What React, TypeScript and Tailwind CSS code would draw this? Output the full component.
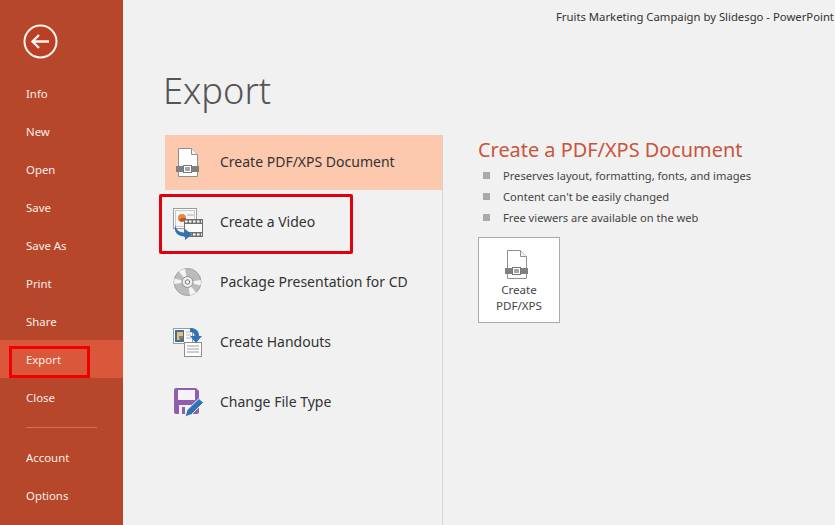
const top = ["Info", "New", "Open", "Save", "Save As", "Print", "Share", "Export", "Close"];

function Nav({ label }: { label: string }) {
  const active = label === "Export";
  return (
    <div className={`h-[38px] flex items-center pl-[26px] pt-[1px] text-[11.4px] text-[#fbeee9] ${active ? "bg-[#d9583b]" : ""}`}>
      {label}
    </div>
  );
}

function PdfIcon() {
  return (
    <svg width="38" height="38" viewBox="0 0 38 38" className="shrink-0">
      <path d="M8.5 24V4.5H21.5L27.5 10.5V24ZM8.5 27V32.5H27.5V27Z" fill="#fff" stroke="#8f8f8f" />
      <path d="M21.5 4.5V10.5H27.5" fill="#f3f3f3" stroke="#8f8f8f" />
      <rect x="6" y="22" width="7" height="6" fill="#808080" />
      <rect x="22" y="22" width="7" height="6" fill="#808080" />
      <rect x="13.5" y="21.5" width="8" height="7" fill="#fff" stroke="#777" />
      <rect x="15" y="23" width="5" height="4" fill="#a6a6a6" />
    </svg>
  );
}

function VideoIcon() {
  return (
    <svg width="38" height="38" viewBox="0 0 38 38" className="shrink-0">
      <rect x="3.5" y="4.5" width="23" height="20" fill="#fff" stroke="#9a9a9a" />
      <rect x="5.5" y="6.5" width="19" height="16" fill="#f4f6f8" stroke="#c8c8c8" />
      <circle cx="12" cy="14" r="4" fill="#e58a3c" />
      <path d="M9 16A4 4 0 0 0 16 14L12 14Z" fill="#c64f32" />
      <path d="M17 11H24" stroke="#b0b0b0" />
      <rect x="14" y="15" width="19" height="18" fill="#6f6f6f" />
      <rect x="15" y="20" width="17" height="8" fill="#fbfbfb" />
      <path d="M15 17.5H32M15 30.5H32" stroke="#fff" strokeWidth="2" strokeDasharray="2.5 1.5" />
      <path d="M5.5 21C6 26 9 28.5 15 28.5V25L22 30.5L15 36V32.5C8 32.5 3 28 5.5 21Z" fill="#2e74b5" />
    </svg>
  );
}

function DiscIcon() {
  return (
    <svg width="38" height="38" viewBox="0 0 38 38" className="shrink-0">
      <circle cx="17.5" cy="18" r="13.5" fill="#bcbcbc" stroke="#a0a0a0" />
      <path d="M17.5 18L9 7.5A13.5 13.5 0 0 1 15 4.7ZM17.5 18L26 28.5A13.5 13.5 0 0 1 20 31.3ZM17.5 18L30.7 16A13.5 13.5 0 0 1 30.5 21.5ZM17.5 18L4.3 20A13.5 13.5 0 0 1 4.5 14.5Z" fill="#f4f4f4" />
      <circle cx="17.5" cy="18" r="5.5" fill="#ededed" stroke="#8f8f8f" />
      <circle cx="17.5" cy="18" r="2.2" fill="#f7f7f7" stroke="#7a7a7a" />
    </svg>
  );
}

function HandoutIcon() {
  return (
    <svg width="38" height="38" viewBox="0 0 38 38" className="shrink-0">
      <rect x="3.5" y="4.5" width="19" height="15" fill="#fff" stroke="#9a9a9a" />
      <rect x="5" y="6" width="9" height="12" fill="#3f6f9f" />
      <path d="M7 8H13V14L9 16H7Z" fill="#e5bf7d" />
      <path d="M9 12H13V15H9Z" fill="#9b7a3f" />
      <path d="M16 8H21M16 11H21M16 14H21" stroke="#b0b0b0" />
      <rect x="14.5" y="18.5" width="17" height="14" fill="#fff" stroke="#8c8c8c" />
      <path d="M17 22H29M17 25H29M17 28H29" stroke="#9a9a9a" />
      <path d="M20 4C26 4 29 7 29 12H32L26 19L20 12H24.5C24.5 9.5 23 8 20 8Z" fill="#2e74b5" />
    </svg>
  );
}

function SaveIcon() {
  return (
    <svg width="38" height="38" viewBox="0 0 38 38" className="shrink-0">
      <path d="M6 4H26L29 7V28Q29 30 27 30H6Q4 30 4 28V6Q4 4 6 4Z" fill="#8f5fae" />
      <rect x="8" y="6" width="17" height="10" fill="#f6f2f9" />
      <rect x="9" y="21" width="14" height="9" fill="#f6f2f9" />
      <rect x="12" y="23" width="3" height="7" fill="#8f5fae" />
      <path d="M15 33L17 26L29 14.5L33.5 18.5L21.5 30.5Z" fill="#2e74b5" stroke="#f1f1f1" />
    </svg>
  );
}

function Row({ label, active, icon }: { label: string; active?: boolean; icon: React.ReactNode }) {
  return (
    <div className={`h-[55px] flex items-center text-[14px] text-[#333] ${active ? "bg-[#fcc9ae]" : ""}`}>
      <div className="w-[55px] pl-[5px] pt-[1px] flex">{icon}</div>
      <span className="pb-[2px]">{label}</span>
    </div>
  );
}

export default function App() {
  return (
    <div className="relative flex w-[835px] h-[525px] overflow-hidden bg-[#f1f1f1] font-['Noto_Sans','Open_Sans',sans-serif]">
      <aside className="w-[123px] shrink-0 bg-[#b7472a] flex flex-col">
        <div className="pl-[23px] pt-[24px] pb-[15px]">
          <svg width="35" height="35" viewBox="0 0 35 35">
            <circle cx="17.5" cy="17.5" r="16" fill="#bb3f24" stroke="#fdf3ef" strokeWidth="2" />
            <path d="M9.5 17.5H26M16 11L9.5 17.5L16 24" fill="none" stroke="#fdf3ef" strokeWidth="2.4" />
          </svg>
        </div>
        {top.map((t) => <Nav key={t} label={t} />)}
        <div className="mx-[26px] my-[11px] h-px bg-[#cf7358]" />
        <div className="-mt-[1px]">
          <Nav label="Account" />
          <Nav label="Options" />
        </div>
      </aside>

      <main className="flex-1 flex flex-col min-w-0">
        <div className="h-[33px] pl-[433px] pt-[8px] text-[11.3px] leading-[17px] text-[#333] whitespace-nowrap">
          Fruits Marketing Campaign by Slidesgo - PowerPoint
        </div>
        <h1 className="pl-[40px] mt-[29px] h-[73px] text-[36.3px] leading-[56px] font-light text-[#555]">Export</h1>
        <div className="flex flex-1 pl-[42px]">
          <div className="w-[278px] border-r border-[#d4d4d4] flex flex-col gap-[5px]">
            <Row active label="Create PDF/XPS Document" icon={<PdfIcon />} />
            <Row label="Create a Video" icon={<VideoIcon />} />
            <Row label="Package Presentation for CD" icon={<DiscIcon />} />
            <Row label="Create Handouts" icon={<HandoutIcon />} />
            <Row label="Change File Type" icon={<SaveIcon />} />
          </div>
          <div className="pl-[35px]">
            <h2 className="text-[19.9px] leading-[30px] text-[#c9553c]">Create a PDF/XPS Document</h2>
            <ul className="mt-[1px] text-[11.15px] text-[#444]">
              {["Preserves layout, formatting, fonts, and images", "Content can't be easily changed", "Free viewers are available on the web"].map((t) => (
                <li key={t} className="h-[21px] flex items-center">
                  <span className="w-[7px] h-[7px] bg-[#aaa] ml-[5px] mr-[13px] mb-[3px]" />
                  {t}
                </li>
              ))}
            </ul>
            <button className="mt-[8px] w-[82px] h-[86px] bg-white border border-[#ababab] flex flex-col items-center pt-[8px] text-[11.6px] leading-[16px] text-[#444]">
              <span className="mr-[3px] flex"><PdfIcon /></span>
              <span className="-mt-[2px]">Create</span>
              <span>PDF/XPS</span>
            </button>
          </div>
        </div>
      </main>

      <div className="absolute left-[9px] top-[346px] w-[81px] h-[32px] border-[3px] border-[#f00000]" />
      <div className="absolute left-[159px] top-[194px] w-[194px] h-[60px] border-[3px] border-[#e00010] rounded-[2px]" />
    </div>
  );
}
